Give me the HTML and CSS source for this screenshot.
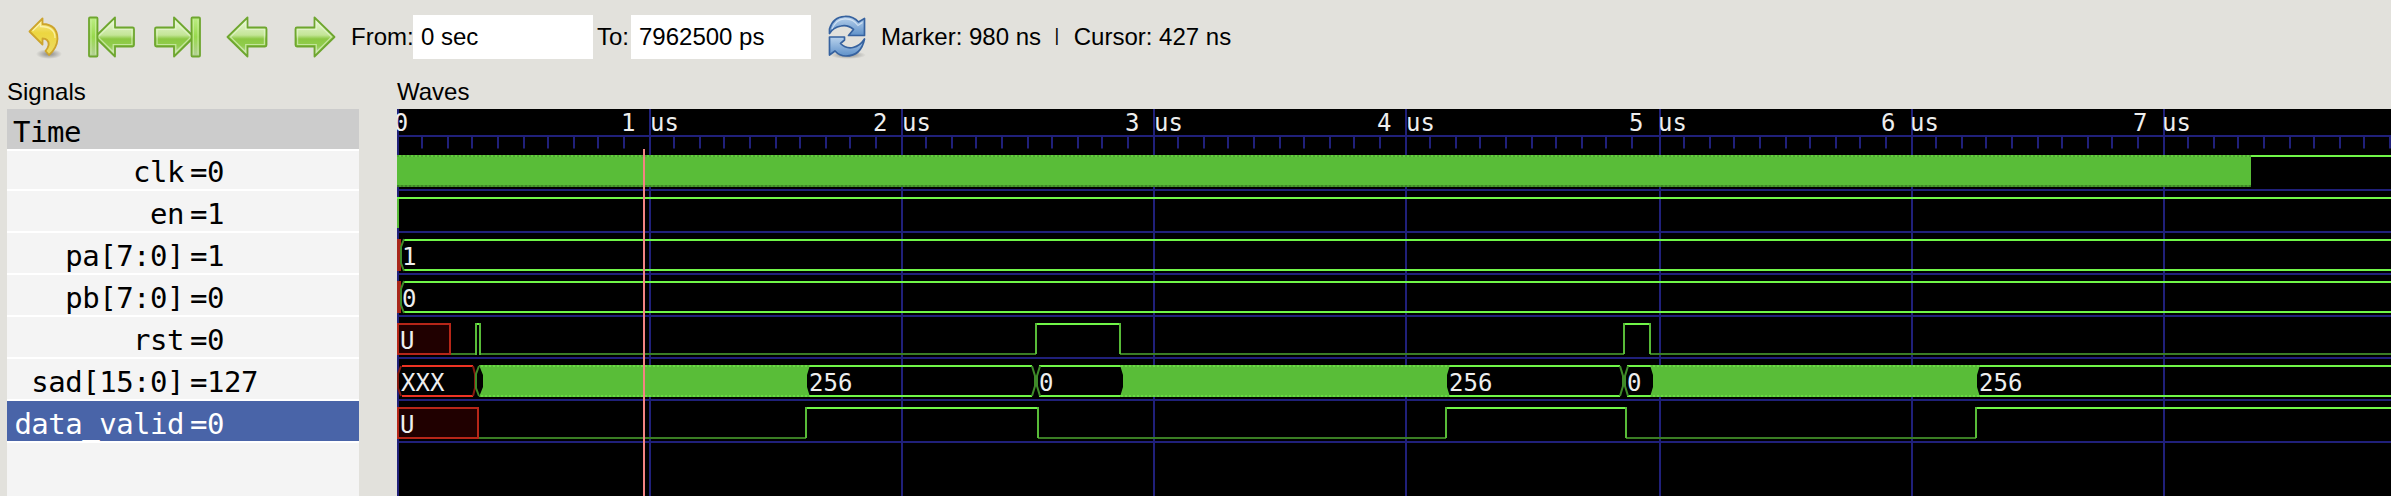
FILE: index.html
```html
<!DOCTYPE html>
<html lang="en">
<head>
<meta charset="utf-8">
<title>Waveform viewer</title>
<link rel="stylesheet" href="styles.css">
</head>
<body>
<svg class="defs" width="0" height="0" aria-hidden="true">
  <defs>
    <linearGradient id="green" x1="0" y1="0" x2="0" y2="1">
      <stop offset="0" stop-color="#f0fae2"/><stop offset=".45" stop-color="#c3e596"/>
      <stop offset=".55" stop-color="#8cc843"/><stop offset=".72" stop-color="#90cc4c"/><stop offset="1" stop-color="#c6dcb0"/>
    </linearGradient>
    <linearGradient id="bar" x1="0" y1="0" x2="0" y2="1">
      <stop offset="0" stop-color="#bdee85"/><stop offset=".5" stop-color="#98d94c"/><stop offset="1" stop-color="#b5cf9b"/>
    </linearGradient>
    <linearGradient id="gold" x1="0" y1="0" x2="0" y2="1">
      <stop offset="0" stop-color="#f8ec9d"/><stop offset=".4" stop-color="#ecd640"/><stop offset="1" stop-color="#eddb66"/>
    </linearGradient>
    <linearGradient id="blue" x1="0" y1="0" x2="0" y2="1">
      <stop offset="0" stop-color="#b9d2ec"/><stop offset="1" stop-color="#5f91c9"/>
    </linearGradient>
    <radialGradient id="shade"><stop offset="0" stop-color="#000" stop-opacity=".4"/><stop offset="1" stop-color="#000" stop-opacity="0"/></radialGradient>
    <symbol id="arrow" viewBox="0 0 42 42">
      <path d="M1.5 21 21.5 1.5V11.5H39Q40.5 11.5 40.5 13V29Q40.5 30.5 39 30.5H21.5V40.5Z" fill="url(#green)" stroke="#6ea62f" stroke-width="1.8" stroke-linejoin="round"/>
      <path d="M4.5 21 19.7 6V13.5H38.4V28.5H19.7V36Z" fill="none" stroke="#e8f7d4" stroke-width="1.2" opacity=".6"/>
    </symbol>
  </defs>
</svg>

<header class="toolbar">
  <svg class="icon undo" viewBox="0 0 34 44">
    <ellipse cx="21" cy="39" rx="13" ry="5" fill="url(#shade)"/>
    <path d="M1.5 16.5 14.5 3.5V9Q29.500 9.500 29.500 24Q29 33 21 40L17.500 36Q23 29 19 25Q17.500 23.500 14.500 23.500V29.500Z" fill="url(#gold)" stroke="#cda42c" stroke-width="1.800" stroke-linejoin="round"/>
    <path d="M4.500 16 12.500 8V11.500Q27 11.500 27 23" fill="none" stroke="#fff8bd" stroke-width="1.300" opacity=".75"/>
  </svg>
  <svg class="icon first" viewBox="0 0 47 42">
    <use href="#arrow" x="5.500" y="0" width="42" height="42"/>
    <rect x="1" y="1.500" width="8.500" height="39" rx="1" fill="url(#bar)" stroke="#6ea62f" stroke-width="1.800"/>
    <path d="M3 3.500V38.500M7.600 3.500V38.500" stroke="#d3f0ad" opacity=".7"/>
  </svg>
  <svg class="icon last" viewBox="0 0 47 42">
    <g transform="translate(47 0) scale(-1 1)">
      <use href="#arrow" x="5.500" y="0" width="42" height="42"/>
      <rect x="1" y="1.500" width="8.500" height="39" rx="1" fill="url(#bar)" stroke="#6ea62f" stroke-width="1.800"/>
      <path d="M3 3.500V38.500M7.600 3.500V38.500" stroke="#d3f0ad" opacity=".7"/>
    </g>
  </svg>
  <svg class="icon prev" viewBox="0 0 42 42"><use href="#arrow" width="42" height="42"/></svg>
  <svg class="icon next" viewBox="0 0 42 42"><use href="#arrow" width="42" height="42" transform="translate(42 0) scale(-1 1)"/></svg>
  <span class="label from">From:</span><span class="field">0 sec</span>
  <span class="label to">To:</span><span class="field">7962500 ps</span>
  <svg class="icon reload" viewBox="0 0 40 44">
    <ellipse cx="21" cy="40" rx="18" ry="4" fill="url(#shade)"/>
    <g fill="url(#blue)" stroke="#36629f" stroke-width="1.700" stroke-linejoin="round">
      <path d="M2.500 18.500V14Q6 2 17.500 1.500Q26 1 31.500 7L37.500 3.500V20.500H21.500L26.500 14.500Q21 9.500 14 11Q6 12.500 2.500 18.500Z"/>
      <path d="M37.500 24Q34 41 19 41Q12.500 41 8 36L2.500 40V22H17.500V25L13.500 28.500Q19 34 26 32.500Q33 31 37.500 24Z"/>
    </g>
    <path d="M5 14Q9 4 18 3.800Q26 3.500 31 10.500L35.500 7.500" fill="none" stroke="#e5f0fa" stroke-width="1.200" opacity=".7"/>
  </svg>
  <span class="status">Marker: 980 ns&nbsp; <span class="divider">|</span>&nbsp; Cursor: 427 ns</span>
</header>

<main class="panes">
  <section class="signals">
    <h2 class="title">Signals</h2>
    <div class="list">
      <div class="row time">Time</div>
      <div class="row first-signal"><span class="name">clk</span><span>=0</span></div>
      <div class="row"><span class="name">en</span><span>=1</span></div>
      <div class="row"><span class="name">pa[7:0]</span><span>=1</span></div>
      <div class="row"><span class="name">pb[7:0]</span><span>=0</span></div>
      <div class="row"><span class="name">rst</span><span>=0</span></div>
      <div class="row"><span class="name">sad[15:0]</span><span>=127</span></div>
      <div class="row selected"><span class="name">data_valid</span><span>=0</span></div>
    </div>
  </section>
  <section class="waves">
    <h2 class="title">Waves</h2>
    <svg class="canvas" viewBox="397 109 1994 387" width="1994" height="387">
      <defs>
        <pattern id="clockEdge" x="397" width="4" height="32" y="155" patternUnits="userSpaceOnUse">
          <rect width="4" height="32" fill="#59bd38"/><rect width="2" height="2" fill="#50a832"/><rect x="2" width="2" height="2" fill="#60d03c"/>
          <rect y="30" width="4" height="2" fill="#4a9c2f"/><rect y="30" width="2" height="2" fill="#3c8325"/>
        </pattern>
        <pattern id="busEdge" x="397" width="4" height="32" y="365" patternUnits="userSpaceOnUse">
          <rect width="4" height="32" fill="#59bd38"/><rect width="2" height="2" fill="#68dc43"/><rect y="30" width="2" height="2" fill="#68dc43"/>
        </pattern>
        <path id="ticks" d="M24 0V11.500M50 0V11.500M74 0V11.500M100 0V11.500M126 0V11.500M150 0V11.500M176 0V11.500M200 0V11.500M226 0V11.500"/>
      </defs>
      <g class="grid">
        <path d="M398 109V496M650 109V496M902 109V496M1154 109V496M1406 109V496M1660 109V496M1912 109V496M2164 109V496"/>
        <path d="M397 136H2391M397 190H2391M397 232H2391M397 274H2391M397 316H2391M397 358H2391M397 400H2391M397 442H2391"/>
        <use href="#ticks" x="398" y="137"/><use href="#ticks" x="650" y="137"/><use href="#ticks" x="902" y="137"/><use href="#ticks" x="1154" y="137"/>
        <use href="#ticks" x="1406" y="137"/><use href="#ticks" x="1660" y="137"/><use href="#ticks" x="1912" y="137"/><use href="#ticks" x="2164" y="137"/>
      </g>
      <g class="text scale">
        <text x="401">0</text><text x="650">1 us</text><text x="902">2 us</text><text x="1154">3 us</text>
        <text x="1406">4 us</text><text x="1658">5 us</text><text x="1910">6 us</text><text x="2162">7 us</text>
      </g>
      <!-- clk, en -->
      <rect x="397" y="155" width="1854" height="32" fill="url(#clockEdge)"/>
      <path class="edge" d="M398 197V228"/>
      <path class="high" d="M2251 156H2391M397 198H2391"/>
      <!-- pa, pb -->
      <path class="high" d="M403 240H2391M403 270H2391M403 282H2391M403 312H2391"/>
      <g class="unknown-fill"><rect x="397" y="239" width="4" height="32"/><rect x="397" y="281" width="4" height="32"/></g>
      <path class="bus-edge" d="M404 239 401 247V263L404 271M404 281 401 289V305L404 313"/>
      <!-- rst -->
      <path class="low" d="M451 354H476M480 354H1036M1120 354H1624M1650 354H2391"/>
      <path class="high" d="M476 324H480M1036 324H1120M1624 324H1650"/>
      <path class="edge" d="M476 323V355M480 323V355M1036 323V354M1120 323V354M1624 323V354M1650 323V354"/>
      <rect class="unknown" x="398" y="324" width="52" height="30"/>
      <!-- sad -->
      <path class="high" d="M808 366H1032M808 396H1032M1039 366H1121M1039 396H1121M1448 366H1620M1448 396H1620M1627 366H1651M1627 396H1651M1978 366H2391M1978 396H2391"/>
      <path class="red-line" d="M402 366H473M402 396H473"/>
      <path class="red-edge" d="M401 366 398 374V388L401 396M473 366 475 374V388L473 396"/>
      <g fill="url(#busEdge)">
        <path d="M479 365H810L807 375V387L810 397H479L483 387V375Z"/>
        <path d="M1120 365H1450L1447 375V387L1450 397H1120L1123 387V375Z"/>
        <path d="M1650 365H1980L1977 375V387L1980 397H1650L1653 387V375Z"/>
      </g>
      <path class="bus-edge" d="M479 366 476 374V388L479 396M1032 366 1035 376V386L1032 396M1040 366 1037 376V386L1040 396M1620 366 1623 376V386L1620 396M1628 366 1625 376V386L1628 396"/>
      <!-- data_valid -->
      <path class="low" d="M479 438H806M1038 438H1446M1626 438H1976"/>
      <path class="high" d="M806 408H1038M1446 408H1626M1976 408H2391"/>
      <path class="edge" d="M806 407V438M1038 407V438M1446 407V438M1626 407V438M1976 407V438"/>
      <rect class="unknown" x="398" y="408" width="80" height="30"/>
      <g class="text">
        <text x="402" y="265">1</text><text x="402" y="307">0</text><text x="400" y="349">U</text><text x="401" y="391">XXX</text><text x="400" y="433">U</text>
        <text x="809" y="391">256</text><text x="1039" y="391">0</text><text x="1449" y="391">256</text><text x="1627" y="391">0</text><text x="1979" y="391">256</text>
      </g>
      <path class="marker" d="M644 149V496"/>
    </svg>
  </section>
</main>
</body>
</html>
```

FILE: styles.css
```css
* { box-sizing: border-box; }
body {
  margin: 0;
  width: 2391px;
  height: 496px;
  overflow: hidden;
  background: #e2e1dc;
  color: #000;
  font: 24px/28px "Liberation Sans", Arial, sans-serif;
}
.defs { display: block; }
.toolbar { display: flex; align-items: center; height: 74px; padding-left: 28px; white-space: nowrap; }
.icon { display: block; flex: none; height: 42px; }
.undo { width: 34px; height: 44px; }
.first { width: 47px; margin-left: 26px; }
.last { width: 47px; margin-left: 19px; }
.prev { width: 42px; margin-left: 25px; }
.next { width: 42px; margin-left: 26px; }
.from { width: 62px; margin-left: 15px; }
.to { width: 34px; margin-left: 4px; }
.field { width: 180px; height: 44px; padding: 8px 0 0 8px; background: #fff; }
.reload { width: 40px; height: 44px; margin-left: 16px; }
.status { margin-left: 14px; }
.divider { display: inline-block; width: 6px; font-size: 18px; line-height: 18px; vertical-align: 4px; }
.panes { display: flex; height: 422px; }
.title { margin: 0; padding-top: 4px; height: 35px; font: inherit; }
.signals { width: 397px; padding-left: 7px; }
.list {
  width: 352px;
  height: 387px;
  background: #f4f4f4;
  font: 29px/42px "DejaVu Sans Mono", monospace;
  letter-spacing: -.5px;
}
.row { display: flex; gap: 6px; height: 42px; border-bottom: 2px solid #fff; line-height: 46px; white-space: nowrap; }
.first-signal { height: 40px; line-height: 42px; }
.name { display: flex; justify-content: flex-end; width: 177px; }
.time { padding-left: 6px; background: #ccc; }
.selected { background: #4964a8; color: #fff; }
.waves { width: 1994px; }
.canvas { display: block; background: #000; }
.grid path, .grid use { stroke: #20207a; stroke-width: 2; fill: none; }
.high, .low, .edge, .red-line, .red-edge, .bus-edge, .marker { fill: none; stroke-width: 2; }
.high { stroke: #70f648; }
.low { stroke: #3a7d24; }
.edge { stroke: #58bb38; }
.bus-edge { stroke: #3f8b29; }
.red-line { stroke: #ed3323; }
.red-edge { stroke: #85190f; }
.unknown { fill: #200000; stroke: #b62618; stroke-width: 2; }
.unknown-fill { fill: #a8271b; }
.marker { stroke: #f28383; }
.text { fill: #eee; font: 24px "DejaVu Sans Mono", monospace; }
.scale text { text-anchor: middle; transform: translateY(131px); }
```
